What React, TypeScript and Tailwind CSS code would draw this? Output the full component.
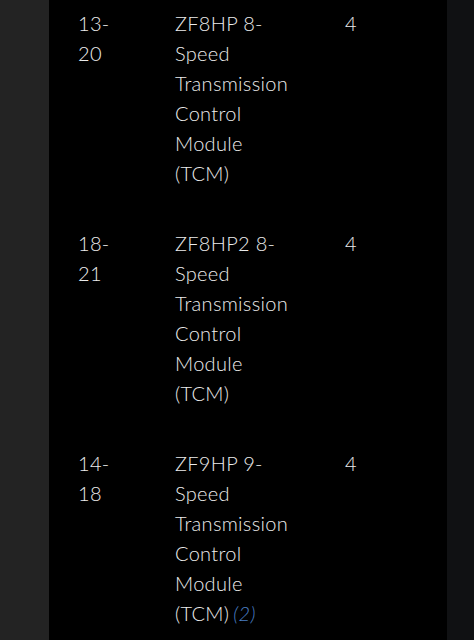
const rows = [
  { years: "13-20", part: "ZF8HP 8-Speed Transmission Control Module (TCM)", qty: "4" },
  { years: "18-21", part: "ZF8HP2 8-Speed Transmission Control Module (TCM)", qty: "4" },
  { years: "14-18", part: "ZF9HP 9-Speed Transmission Control Module (TCM)", qty: "4", note: "(2)" },
];

export default function App() {
  return (
    <div className="flex h-[640px] w-[474px] overflow-hidden bg-[#232323] font-['Lato',sans-serif]">
      <div className="w-[49px] shrink-0" />
      <div className="w-[398px] shrink-0 bg-black pt-[8px] text-[20px] font-light leading-[30px] tracking-[0.3px] text-[#ececec]">
        {rows.map((r) => (
          <div key={r.years} className="flex pb-[40px]">
            <div className="ml-[29px] w-[36px] shrink-0">{r.years}</div>
            <div className="ml-[61px] w-[121px] shrink-0">
              {r.part}
              {r.note && <span className="inline-block pl-[4px] italic text-[#4a7fc4]">{r.note}</span>}
            </div>
            <div className="ml-[49px]">{r.qty}</div>
          </div>
        ))}
      </div>
      <div className="flex-1 bg-[#101113]" />
    </div>
  );
}
